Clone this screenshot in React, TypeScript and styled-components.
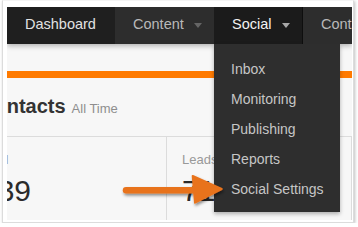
import React from "react";
import styled, { createGlobalStyle } from "styled-components";

const GlobalStyle = createGlobalStyle`
  html, body {
    margin: 0;
    padding: 0;
    background: #ffffff;
    font-family: "Liberation Sans", Arial, Helvetica, sans-serif;
  }
`;

const Frame = styled.div`
  margin-left: 2px;
  width: 352px;
  height: 223px;
  box-sizing: border-box;
  padding: 6px 2px 4px 4px;
  background: #fff;
  border: 1px solid #dcdcdc;
  border-top-color: #f4f4f4;
  box-shadow: 1px 1px 3px rgba(0, 0, 0, 0.25);
`;

const Screen = styled.div`
  position: relative;
  width: 345px;
  height: 213px;
  overflow: hidden;
  background: #f7f7f7;
`;

const NavBar = styled.nav`
  position: relative;
  z-index: 2;
  display: flex;
  height: 37px;
  background: #2d2d2d;
  box-shadow: 0 2px 5px rgba(0, 0, 0, 0.28);
`;

const Tab = styled.div<{ $width?: number; $bg: string; $color: string; $active?: boolean }>`
  position: relative;
  flex: ${(p) => (p.$width ? `0 0 ${p.$width}px` : "1 1 auto")};
  display: flex;
  align-items: center;
  gap: 10px;
  box-sizing: border-box;
  padding: 0 0 3px 18px;
  background: ${(p) => p.$bg};
  color: ${(p) => p.$color};
  font-size: 14.5px;
  white-space: nowrap;
  border-right: ${(p) => (p.$active ? "1px solid #0e0e0e" : "none")};
`;

const Caret = styled.span<{ $color: string }>`
  width: 0;
  height: 0;
  margin-top: 2px;
  border-left: 4.5px solid transparent;
  border-right: 4.5px solid transparent;
  border-top: 5px solid ${(p) => p.$color};
`;

const Dropdown = styled.ul`
  position: absolute;
  top: 37px;
  left: 0;
  width: 126px;
  margin: 0;
  padding: 10px 0 8px;
  list-style: none;
  background: #2e2e2e;
  box-shadow: 0 2px 4px rgba(0, 0, 0, 0.3);
`;

const MenuItem = styled.li`
  height: 30px;
  line-height: 30px;
  padding-left: 17px;
  color: #c6c6c6;
  font-size: 14px;
`;

const Main = styled.div`
  margin-left: -41px;
`;

const OrangeBar = styled.div`
  margin-top: 27px;
  height: 7px;
  background: #ff7a00;
`;

const Heading = styled.div`
  display: flex;
  align-items: baseline;
  gap: 6px;
  height: 59px;
  box-sizing: border-box;
  padding: 16px 0 0 14px;
  border-bottom: 1px solid #dcdcdc;
`;

const Title = styled.h2`
  margin: 0;
  font-size: 20px;
  line-height: 24px;
  font-weight: bold;
  color: #333;
`;

const Range = styled.span`
  font-size: 13px;
  color: #8e8e8e;
`;

const StatsRow = styled.div`
  display: grid;
  grid-template-columns: 201px 1fr;
  height: 90px;
`;

const StatCell = styled.div`
  padding: 15px 15px 0;
  border-right: 1px solid #dcdcdc;
`;

const StatLabel = styled.div`
  font-size: 13px;
  line-height: 15px;
  color: #999;
`;

const StatValue = styled.div`
  margin-top: 7px;
  font-size: 30px;
  line-height: 34px;
  color: #2b2b2b;
`;

const Pointer = styled.svg`
  position: absolute;
  left: 111px;
  top: 164px;
  z-index: 3;
`;

export default function App() {
  return (
    <>
      <GlobalStyle />
      <Frame>
        <Screen>
          <NavBar>
            <Tab $width={108} $bg="#1f1f1f" $color="#e2e2e2">
              Dashboard
            </Tab>
            <Tab $width={99} $bg="#2d2d2d" $color="#b9b9b9">
              Content
              <Caret $color="#656565" />
            </Tab>
            <Tab $width={89} $bg="#1b1b1b" $color="#f2f2f2" $active>
              Social
              <Caret $color="#a8a8a8" />
              <Dropdown>
                <MenuItem>Inbox</MenuItem>
                <MenuItem>Monitoring</MenuItem>
                <MenuItem>Publishing</MenuItem>
                <MenuItem>Reports</MenuItem>
                <MenuItem>Social Settings</MenuItem>
              </Dropdown>
            </Tab>
            <Tab $bg="#2d2d2d" $color="#b9b9b9">
              Contacts
            </Tab>
          </NavBar>
          <Main>
            <OrangeBar />
            <Heading>
              <Title>Contacts</Title>
              <Range>All Time</Range>
            </Heading>
            <StatsRow>
              <StatCell>
                <StatLabel>Total</StatLabel>
                <StatValue>239</StatValue>
              </StatCell>
              <StatCell>
                <StatLabel>Leads</StatLabel>
                <StatValue>71</StatValue>
              </StatCell>
            </StatsRow>
          </Main>
          <Pointer width="110" height="40" viewBox="0 0 110 40">
            <defs>
              <filter id="arrowShadow" x="-20%" y="-40%" width="140%" height="180%">
                <feDropShadow dx="1" dy="2" stdDeviation="1.4" floodColor="#000" floodOpacity="0.45" />
              </filter>
            </defs>
            <g filter="url(#arrowShadow)" fill="#e8731d" stroke="#e8731d">
              <line x1="8" y1="19.3" x2="80" y2="19.3" strokeWidth="6.5" strokeLinecap="round" />
              <polygon points="74.7,5 103.7,18 77,31.7" strokeWidth="2" strokeLinejoin="round" />
            </g>
          </Pointer>
        </Screen>
      </Frame>
    </>
  );
}
